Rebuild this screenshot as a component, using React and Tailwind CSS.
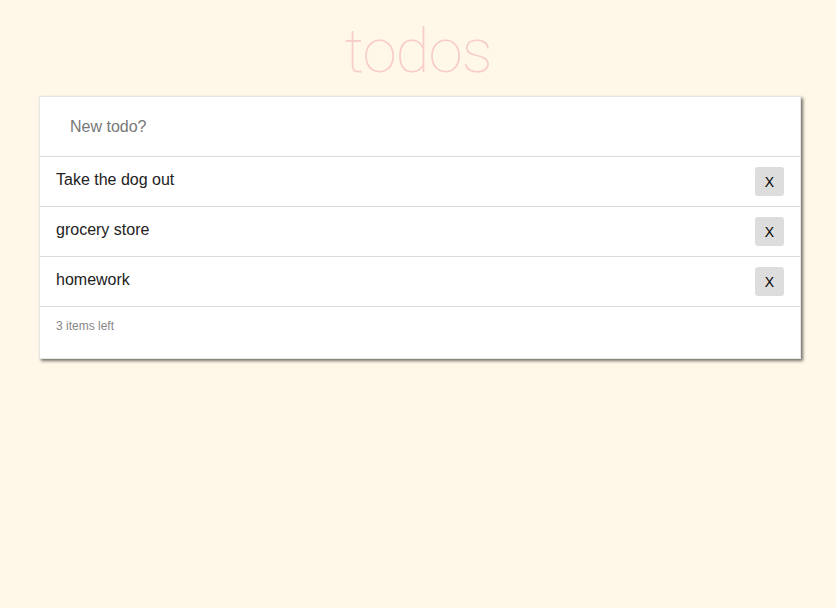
import React, { useState } from "react";

const initialTodos = [
  { id: 1, text: "Take the dog out" },
  { id: 2, text: "grocery store" },
  { id: 3, text: "homework" },
];

export default function App() {
  const [todos, setTodos] = useState(initialTodos);
  const [draft, setDraft] = useState("");

  function addTodo(e) {
    e.preventDefault();
    if (!draft.trim()) return;
    setTodos([...todos, { id: Date.now(), text: draft.trim() }]);
    setDraft("");
  }

  return (
    <div
      className="min-h-screen bg-[#fff8e9] px-[39px] pt-[14px]"
      style={{ fontFamily: "'Liberation Sans', Arial, sans-serif" }}
    >
      <h1
        className="text-center text-[62px] leading-[74px] font-thin text-[#f7cccc] tracking-[-1px]"
        style={{ fontFamily: "Roboto, 'Liberation Sans', sans-serif" }}
      >
        todos
      </h1>

      <div className="mt-[8px] w-[762px] bg-white border border-[#e6e6e6] shadow-[2px_2px_3px_rgba(0,0,0,0.55)]">
        <form onSubmit={addTodo} className="border-b border-[#dcdcdc]">
          <input
            value={draft}
            onChange={(e) => setDraft(e.target.value)}
            placeholder="New todo?"
            className="w-full h-[59px] pl-[30px] text-[16px] text-[#222] placeholder:text-[#777] outline-none"
          />
        </form>

        <ul>
          {todos.map((t) => (
            <li
              key={t.id}
              className="flex items-center justify-between h-[50px] pl-[16px] pr-[16px] border-b border-[#dcdcdc]"
            >
              <span className="text-[16px] text-[#222] -mt-[3px]">{t.text}</span>
              <button
                onClick={() => setTodos(todos.filter((x) => x.id !== t.id))}
                className="w-[29px] h-[29px] rounded-[3px] bg-[#dddddd] text-[14px] text-black leading-none"
              >
                X
              </button>
            </li>
          ))}
        </ul>

        <div className="h-[51px] pl-[16px] pt-[10px] text-[12px] text-[#888]">
          {todos.length} items left
        </div>
      </div>
    </div>
  );
}
